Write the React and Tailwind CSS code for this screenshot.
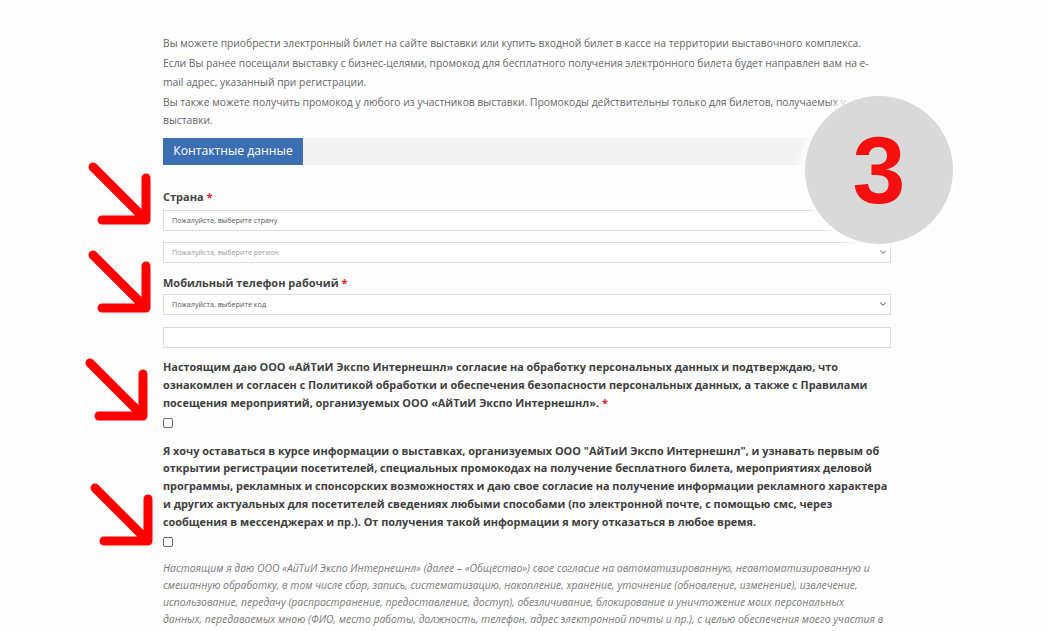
import { ChevronDown } from "lucide-react";

const Arrow = ({ className }) => (
  <svg className={`absolute ${className}`} width="64" height="64" viewBox="0 0 64 64" fill="none">
    <path d="M5 6 L58 59 M14 59 H58 V17" stroke="#ff0000" strokeWidth="9" strokeLinecap="round" strokeLinejoin="round" />
  </svg>
);

const Select = ({ text, light, arrow = true, className = "" }) => (
  <div className={`flex h-[21px] items-center justify-between border border-[#dcdcdc] bg-white pl-[8px] pr-[2px] ${className}`}>
    <span className={`text-[7.2px] ${light ? "text-[#9a9a9a]" : "text-[#555]"}`}>{text}</span>
    {arrow && <ChevronDown size={10} strokeWidth={2.5} className="text-[#666]" />}
  </div>
);

const Star = () => <span className="text-[#d8262c]"> *</span>;

export default function App() {
  return (
    <div className="relative min-h-[631px] w-[1048px] overflow-hidden bg-[#fdfdfd] font-['Open_Sans',sans-serif]">
      <div className="ml-[163px] w-[728px] pt-[34px]">
        <div className="whitespace-nowrap text-[10.3px] leading-[18.5px] text-[#666]">
          <p className="mb-[1.5px]">Вы можете приобрести электронный билет на сайте выставки или купить входной билет в кассе на территории выставочного комплекса.</p>
          <p className="mb-[1.5px]">
            Если Вы ранее посещали выставку с бизнес-целями, промокод для бесплатного получения электронного билета будет направлен вам на e-
            <br />
            mail адрес, указанный при регистрации.
          </p>
          <p>
            Вы также можете получить промокод у любого из участников выставки. Промокоды действительны только для билетов, получаемых у
            <br />
            выставки.
          </p>
        </div>

        <div className="mt-[8px] flex h-[27px] bg-[#f3f3f3]">
          <div className="flex w-[140px] items-center justify-center bg-[#3c6eb4] text-[12.2px] text-white">Контактные данные</div>
        </div>

        <div className="mt-[24px] text-[11px] font-bold leading-[16px] text-[#444]">
          Страна<Star />
        </div>
        <Select className="mt-[5px]" text="Пожалуйста, выберите страну" />
        <Select className="mt-[11px]" text="Пожалуйста, выберите регион" light />

        <div className="mt-[12px] text-[11px] font-bold leading-[16px] text-[#444]">
          Мобильный телефон рабочий<Star />
        </div>
        <Select className="mt-[3px]" text="Пожалуйста, выберите код" />
        <div className="mt-[12px] h-[21px] border border-[#dcdcdc] bg-white" />

        <p className="mt-[10px] whitespace-nowrap text-[10.9px] font-bold leading-[18px] text-[#3f3f3f]">
          Настоящим даю ООО «АйТиИ Экспо Интернешнл» согласие на обработку персональных данных и подтверждаю, что
          <br />
          ознакомлен и согласен с Политикой обработки и обеспечения безопасности персональных данных, а также с Правилами
          <br />
          посещения мероприятий, организуемых ООО «АйТиИ Экспо Интернешнл».<Star />
        </p>
        <div className="mt-[6px] h-[10px] w-[10px] rounded-[2px] border border-[#666] bg-white" />

        <p className="mt-[14px] whitespace-nowrap text-[10.9px] font-bold leading-[17.8px] text-[#3f3f3f]">
          Я хочу оставаться в курсе информации о выставках, организуемых ООО "АйТиИ Экспо Интернешнл", и узнавать первым об
          <br />
          открытии регистрации посетителей, специальных промокодах на получение бесплатного билета, мероприятиях деловой
          <br />
          программы, рекламных и спонсорских возможностях и даю свое согласие на получение информации рекламного характера
          <br />
          и других актуальных для посетителей сведениях любыми способами (по электронной почте, с помощью смс, через
          <br />
          сообщения в мессенджерах и пр.). От получения такой информации я могу отказаться в любое время.
        </p>
        <div className="mt-[7px] h-[10px] w-[10px] rounded-[2px] border border-[#666] bg-white" />

        <p className="mt-[13px] whitespace-nowrap text-[10.4px] italic leading-[16.7px] text-[#7a7a7a]">
          Настоящим я даю ООО «АйТиИ Экспо Интернешнл» (далее – «Общество») свое согласие на автоматизированную, неавтоматизированную и
          <br />
          смешанную обработку, в том числе сбор, запись, систематизацию, накопление, хранение, уточнение (обновление, изменение), извлечение,
          <br />
          использование, передачу (распространение, предоставление, доступ), обезличивание, блокирование и уничтожение моих персональных
          <br />
          данных, передаваемых мною (ФИО, место работы, должность, телефон, адрес электронной почты и пр.), с целью обеспечения моего участия в
          <br />
          выставке, получения информации о выставке, её участниках и мероприятиях, а также в иных целях, указанных в Политике.
        </p>
      </div>

      <Arrow className="left-[88px] top-[161px]" />
      <Arrow className="left-[88px] top-[249px]" />
      <Arrow className="left-[85px] top-[357px]" />
      <Arrow className="left-[90px] top-[482px]" />

      <div className="absolute left-[805px] top-[96px] flex h-[148px] w-[148px] items-center justify-center rounded-full bg-[#d9d9d9] shadow-[0_0_6px_5px_rgba(255,255,255,0.85)]">
        <span className="font-['Liberation_Sans',sans-serif] text-[95px] font-bold leading-none text-[#f50f0f]">3</span>
      </div>
    </div>
  );
}
